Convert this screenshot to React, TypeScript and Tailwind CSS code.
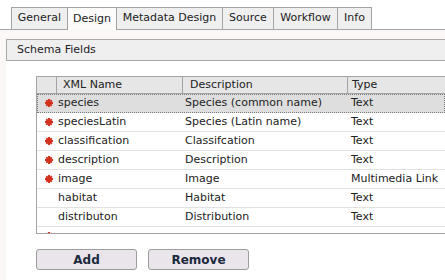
import React from "react";

const tabs = [
	{ label: "General", w: "w-[57px]" },
	{ label: "Design", w: "w-[49px]", active: true },
	{ label: "Metadata Design", w: "w-[106px]" },
	{ label: "Source", w: "w-[51px]" },
	{ label: "Workflow", w: "w-[64px]" },
	{ label: "Info", w: "w-[34px]" },
];

const fields = [
	{ name: "species", desc: "Species (common name)", type: "Text", req: true },
	{ name: "speciesLatin", desc: "Species (Latin name)", type: "Text", req: true },
	{ name: "classification", desc: "Classifcation", type: "Text", req: true },
	{ name: "description", desc: "Description", type: "Text", req: true },
	{ name: "image", desc: "Image", type: "Multimedia Link", req: true },
	{ name: "habitat", desc: "Habitat", type: "Text", req: false },
	{ name: "distributon", desc: "Distribution", type: "Text", req: false },
	{ name: "", desc: "", type: "", req: true },
];

function Required() {
	return (
		<svg width="8" height="8" viewBox="0 0 8 8" className="block">
			<g stroke="#d2321e" strokeWidth="2" strokeLinecap="butt">
				<line x1="4" y1="0" x2="4" y2="8" />
				<line x1="0" y1="4" x2="8" y2="4" />
				<line x1="1.2" y1="1.2" x2="6.8" y2="6.8" />
				<line x1="6.8" y1="1.2" x2="1.2" y2="6.8" />
			</g>
			<circle cx="4" cy="4" r="2" fill="#d2321e" />
		</svg>
	);
}

export default function App() {
	return (
		<div className="w-[445px] h-[280px] overflow-hidden bg-white text-[11px] text-[#222] font-['DejaVu_Sans',sans-serif]">
			{/* tab strip */}
			<div className="flex pl-[11px] pt-[7px] border-b border-[#a4a4a4]">
				{tabs.map((t, i) => (
					<div
						key={t.label}
						className={`${t.w} flex items-center justify-center border-t border-r border-[#a4a4a4] ${i === 0 ? "border-l" : ""} ${
							t.active ? "bg-[#fdfafa] h-[23px] -mb-px" : "bg-[#efefef] h-[22px]"
						}`}
					>
						{t.label}
					</div>
				))}
			</div>

			<div className="bg-[#fcf7f7] pl-[6px] pt-[9px]">
				<div className="h-[22px] flex items-center pl-[10px] border border-r-0 border-[#a8a8a8] bg-[#efefef]">
					Schema Fields
				</div>

				<div className="bg-white pt-[15px] pl-[30px] pb-[20px]">
					<div className="border border-r-0 border-[#a4a4a4] h-[158px] overflow-hidden">
						<div className="flex h-[17px] bg-[#e6e6e6] border-b border-[#a4a4a4]">
							<div className="w-[20px] border-r border-[#a4a4a4]" />
							<div className="w-[126px] pl-[6px] flex items-center border-r border-[#a4a4a4]">XML Name</div>
							<div className="w-[165px] pl-[7px] flex items-center border-r border-[#a4a4a4]">Description</div>
							<div className="flex-1 pl-[4px] flex items-center">Type</div>
						</div>
						{fields.map((f, i) => (
							<div
								key={i}
								className={`flex h-[19px] items-center border-b border-[#e2e2e2] ${
									i === 0 ? "bg-[#dedede] outline-1 outline-dotted outline-[#7a7a7a] -outline-offset-1" : ""
								}`}
							>
								<div className="w-[21px] pl-[8px]">{f.req ? <Required /> : null}</div>
								<div className="w-[127px]">{f.name}</div>
								<div className="w-[164px]">{f.desc}</div>
								<div className="flex-1 pl-[2px]">{f.type}</div>
							</div>
						))}
					</div>

					<div className="flex gap-[11px] mt-[15px]">
						<button className="w-[101px] h-[21px] rounded-[3px] border border-[#9c9c9c] bg-[#e9e5ea] text-[12px] font-bold text-[#1c2a3e]">
							Add
						</button>
						<button className="w-[101px] h-[21px] rounded-[3px] border border-[#9c9c9c] bg-[#e9e5ea] text-[12px] font-bold text-[#1c2a3e]">
							Remove
						</button>
					</div>
				</div>
			</div>
		</div>
	);
}
